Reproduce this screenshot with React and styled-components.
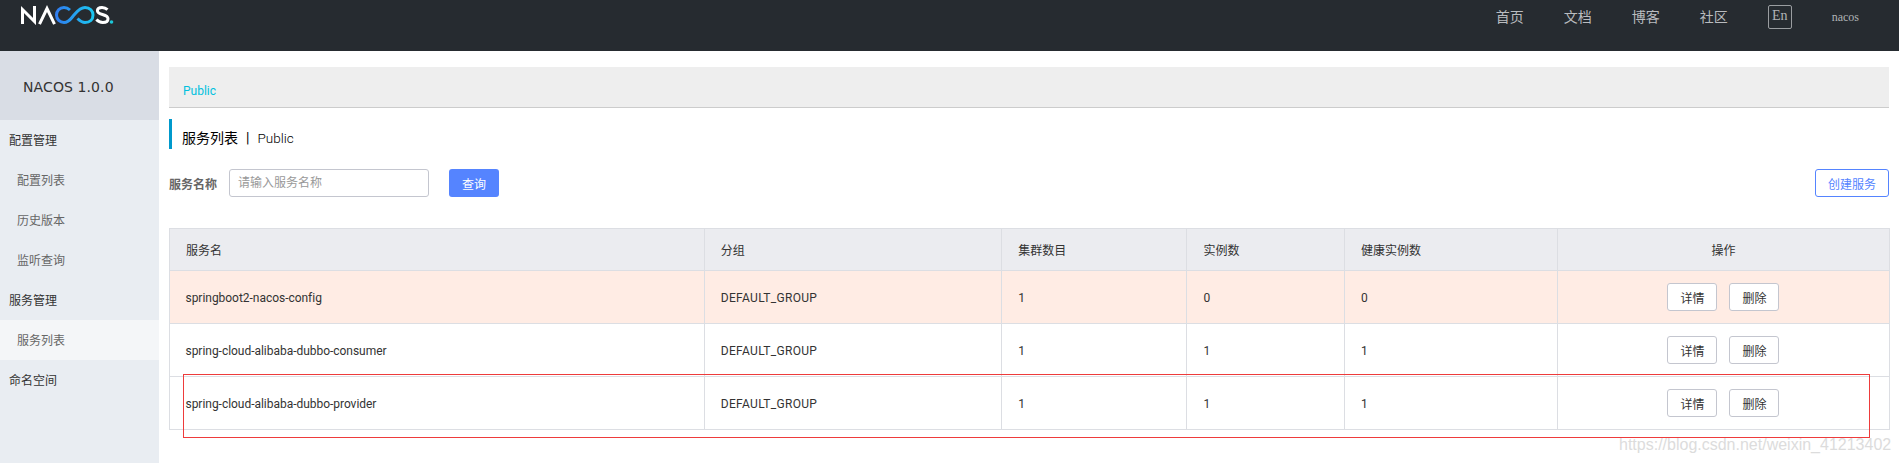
import React from "react";
import styled, { createGlobalStyle } from "styled-components";

const services = [
  { name: "springboot2-nacos-config", clusters: 1, instances: 0, healthy: 0, warn: true },
  { name: "spring-cloud-alibaba-dubbo-consumer", clusters: 1, instances: 1, healthy: 1 },
  { name: "spring-cloud-alibaba-dubbo-provider", clusters: 1, instances: 1, healthy: 1 },
];

function Logo() {
  return (
    <LogoSvg viewBox="0 0 94 20" width="94" height="20" fill="none">
      <defs>
        <linearGradient id="loop" x1="0" x2="1" y1="0" y2="0">
          <stop offset="0" stopColor="#2f7df0" />
          <stop offset="1" stopColor="#1cc6f0" />
        </linearGradient>
      </defs>
      <path d="M2.5 19V4.5L14.5 16.5V1" stroke="#fff" strokeWidth="3" />
      <path d="M19.5 19.2L27 3.5L34.5 19.2" stroke="#fff" strokeWidth="3" />
      <path
        d="M50 5C48 3.2 46 2.5 44 2.5C39.5 2.5 36.5 6 36.5 10C36.5 14.5 40 17.5 44 17.5C49 17.5 51 13.5 54 10C57 6.5 60 2.5 65 2.5C70 2.5 73 6 73 10C73 14.5 70 17.5 65 17.5C61.5 17.5 59.5 15.5 57.5 13.5"
        stroke="url(#loop)"
        strokeWidth="3"
      />
      <path
        d="M87.5 4.6C86 3.2 84 2.5 82 2.5C79.2 2.5 77.4 3.8 77.4 5.8C77.4 10.5 88 8.5 88 13.8C88 16 86 17.5 82.8 17.5C80.4 17.5 78.2 16.6 76.4 14.6"
        stroke="#fff"
        strokeWidth="3"
      />
      <circle cx="91.5" cy="17" r="1.8" fill="#1cc6d8" />
    </LogoSvg>
  );
}

function App() {
  return (
    <Page>
      <GlobalStyle />
      <Header>
        <Logo />
        <Nav>
          <NavLink>首页</NavLink>
          <NavLink>文档</NavLink>
          <NavLink>博客</NavLink>
          <NavLink>社区</NavLink>
          <LangBox>En</LangBox>
          <UserName>nacos</UserName>
        </Nav>
      </Header>
      <Body>
        <Sidebar>
          <Version>NACOS 1.0.0</Version>
          <MenuGroup>配置管理</MenuGroup>
          <MenuItem>配置列表</MenuItem>
          <MenuItem>历史版本</MenuItem>
          <MenuItem>监听查询</MenuItem>
          <MenuGroup>服务管理</MenuGroup>
          <MenuItem $active>服务列表</MenuItem>
          <MenuGroup>命名空间</MenuGroup>
        </Sidebar>
        <Main>
          <Breadcrumb>Public</Breadcrumb>
          <Title>
            <span>服务列表</span>
            <TitleSep>|</TitleSep>
            <TitleSpace>Public</TitleSpace>
          </Title>
          <SearchRow>
            <SearchLabel>服务名称</SearchLabel>
            <SearchInput placeholder="请输入服务名称" readOnly />
            <PrimaryButton>查询</PrimaryButton>
            <OutlineButton>创建服务</OutlineButton>
          </SearchRow>
          <Table>
            <colgroup>
              <col width="534.8" />
              <col width="297.4" />
              <col width="185.3" />
              <col width="157.5" />
              <col width="213" />
              <col width="332" />
            </colgroup>
            <thead>
              <tr>
                <Th>服务名</Th>
                <Th>分组</Th>
                <Th>集群数目</Th>
                <Th>实例数</Th>
                <Th>健康实例数</Th>
                <Th $center>操作</Th>
              </tr>
            </thead>
            <tbody>
              {services.map((s) => (
                <Row key={s.name} $warn={s.warn}>
                  <NameCell>{s.name}</NameCell>
                  <GroupCell>DEFAULT_GROUP</GroupCell>
                  <Td>{s.clusters}</Td>
                  <Td>{s.instances}</Td>
                  <Td>{s.healthy}</Td>
                  <ActionCell>
                    <Actions>
                      <ActionButton>详情</ActionButton>
                      <ActionButton>删除</ActionButton>
                    </Actions>
                  </ActionCell>
                </Row>
              ))}
            </tbody>
          </Table>
        </Main>
      </Body>
      <RedMark />
      <Watermark>https://blog.csdn.net/weixin_41213402</Watermark>
    </Page>
  );
}

const GlobalStyle = createGlobalStyle`
  html, body {
    margin: 0;
    padding: 0;
    background: #fff;
  }
  body {
    font-family: "Roboto", "Noto Sans CJK SC", sans-serif;
    font-size: 12px;
    color: #333;
  }
  * {
    box-sizing: border-box;
  }
`;

const Page = styled.div`
  position: relative;
  width: 1899px;
  height: 463px;
  overflow: hidden;
`;

const Header = styled.header`
  height: 51px;
  background: #262b30;
  display: flex;
  justify-content: space-between;
  align-items: flex-start;
  padding: 5px 40px 0 20px;
`;

const LogoSvg = styled.svg`
  display: block;
`;

const Nav = styled.nav`
  display: flex;
  align-items: center;
  height: 24px;
`;

const NavLink = styled.a`
  font-size: 14px;
  line-height: 24px;
  color: #b9bcbf;
  margin-right: 40px;
`;

const LangBox = styled.span`
  width: 24px;
  height: 24px;
  border: 1px solid #9a9da0;
  border-radius: 2px;
  color: #b0b3b6;
  font-family: "Liberation Serif", serif;
  font-size: 14px;
  line-height: 20px;
  text-align: center;
  margin-right: 40px;
`;

const UserName = styled.span`
  font-family: "Liberation Serif", serif;
  font-size: 12px;
  color: #b0b3b6;
`;

const Body = styled.div`
  display: flex;
  height: 412px;
`;

const Sidebar = styled.aside`
  width: 159px;
  flex: none;
  background: #e9edf2;
`;

const Version = styled.div`
  height: 69px;
  background: #d9dde5;
  display: flex;
  align-items: center;
  padding: 2px 0 0 23px;
  font-family: "DejaVu Sans", sans-serif;
  font-size: 14px;
  letter-spacing: 0.1px;
  color: #333;
`;

const MenuGroup = styled.div`
  height: 40px;
  line-height: 42px;
  padding-left: 9px;
  font-size: 12px;
  color: #333;
`;

const MenuItem = styled.div`
  height: 40px;
  line-height: 42px;
  padding-left: 17px;
  font-size: 12px;
  color: #666;
  background: ${(p) => (p.$active ? "#f4f6f8" : "transparent")};
`;

const Main = styled.main`
  flex: 1;
  min-width: 0;
  padding: 16px 10px 0;
`;

const Breadcrumb = styled.div`
  height: 41px;
  line-height: 48px;
  padding-left: 14px;
  background: #eee;
  border-bottom: 1px solid #ccc;
  color: #00c1de;
  font-size: 12px;
`;

const Title = styled.div`
  margin-top: 11px;
  height: 30px;
  line-height: 30px;
  padding: 4px 0 0 10px;
  border-left: 3px solid #09c;
  font-size: 14px;
  color: #000;
  display: flex;
`;

const TitleSep = styled.span`
  margin: 0 8px;
`;

const TitleSpace = styled.span`
  font-size: 13.5px;
  font-weight: 300;
`;

const SearchRow = styled.div`
  margin-top: 20px;
  height: 28px;
  display: flex;
  align-items: center;
`;

const SearchLabel = styled.label`
  width: 60px;
  font-size: 12px;
  font-weight: 700;
  color: #666;
`;

const SearchInput = styled.input`
  width: 200px;
  height: 28px;
  border: 1px solid #c4c6cf;
  border-radius: 3px;
  padding: 0 8px;
  font: inherit;
  font-size: 12px;
  outline: none;
  &::placeholder {
    color: #999;
  }
`;

const PrimaryButton = styled.button`
  width: 50px;
  height: 28px;
  margin-left: 20px;
  padding: 0;
  border: none;
  border-radius: 3px;
  background: #5584ff;
  color: #fff;
  font: inherit;
  font-size: 12px;
`;

const OutlineButton = styled.button`
  width: 74px;
  height: 28px;
  margin-left: auto;
  padding: 0;
  border: 1px solid #5584ff;
  border-radius: 3px;
  background: #fff;
  color: #5584ff;
  font: inherit;
  font-size: 12px;
`;

const Table = styled.table`
  margin-top: 31px;
  width: 1720px;
  table-layout: fixed;
  border-collapse: collapse;
  border: 1px solid #dcdee3;
  font-size: 12px;
`;

const Th = styled.th`
  height: 42px;
  padding: 0 16px;
  background: #ebecf0;
  border: 1px solid #dcdee3;
  font-weight: 400;
  color: #333;
  text-align: ${(p) => (p.$center ? "center" : "left")};
`;

const Row = styled.tr`
  background: ${(p) => (p.$warn ? "#ffece4" : "#fff")};
`;

const Td = styled.td`
  height: 53px;
  padding: 2px 16px 0;
  border: 1px solid #dcdee3;
  color: #333;
`;

const NameCell = styled(Td)`
  padding-left: 15.5px;
  letter-spacing: -0.03px;
`;

const GroupCell = styled(Td)`
  letter-spacing: 0.3px;
`;

const ActionCell = styled(Td)`
  padding: 0 16px;
`;

const Actions = styled.div`
  display: flex;
  justify-content: center;
  gap: 12px;
`;

const ActionButton = styled.button`
  width: 50px;
  height: 28px;
  padding: 0;
  border: 1px solid #c4c6cf;
  border-radius: 3px;
  background: #fff;
  color: #333;
  font: inherit;
  font-size: 12px;
`;

const RedMark = styled.div`
  position: absolute;
  left: 183px;
  top: 374px;
  width: 1687px;
  height: 64px;
  border: 1px solid #ee3b3b;
  pointer-events: none;
`;

const Watermark = styled.div`
  position: absolute;
  left: 1619px;
  top: 435px;
  font-family: "Liberation Sans", sans-serif;
  font-size: 16px;
  line-height: 20px;
  color: #dcdcdc;
  white-space: nowrap;
`;

export default App;
